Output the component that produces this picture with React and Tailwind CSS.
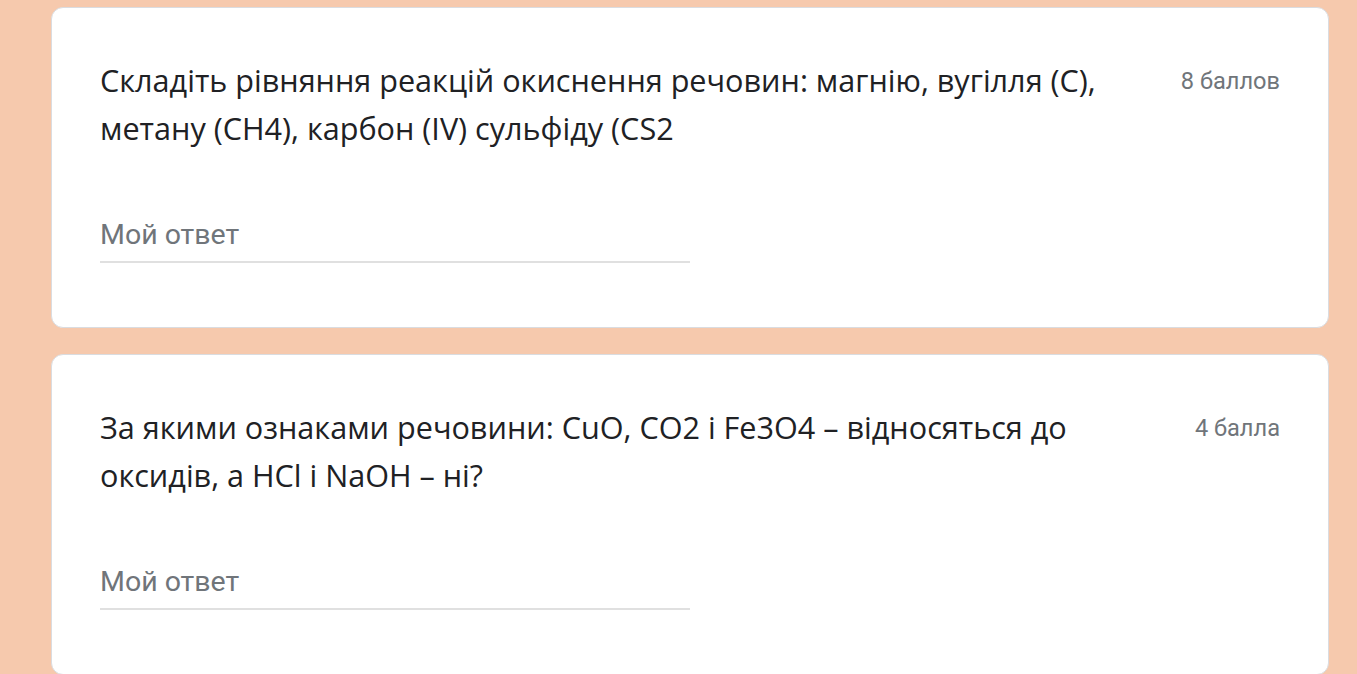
import React from 'react';

const questions = [
  {
    id: 1,
    title: 'Складіть рівняння реакцій окиснення речовин: магнію, вугілля (С), метану (СН4), карбон (IV) сульфіду (CS2',
    points: '8 баллов',
  },
  {
    id: 2,
    title: 'За якими ознаками речовини: CuO, CO2 і Fe3O4 – відносяться до оксидів, а HCl і NaOH – ні?',
    points: '4 балла',
  },
];

const QuestionCard = ({ title, points }) => (
  <div className="rounded-[12px] border border-[#dadce0] bg-white px-12 pb-16 pt-12">
    <div className="flex items-start justify-between gap-10">
      <p className="max-w-[1040px] font-['Open_Sans',sans-serif] text-[30.6px] leading-[48px] text-[#202124]">
        {title}
      </p>
      <span className="shrink-0 whitespace-nowrap pt-[10px] font-['Roboto',sans-serif] text-[23.6px] leading-[30px] text-[#70757a]">
        {points}
      </span>
    </div>
    <div className="mt-[67px] w-[590px] border-b-2 border-[#e0e0e0] pb-[10px]">
      <span className="font-['Roboto',sans-serif] text-[28.5px] leading-[32px] text-[#70757a]">Мой ответ</span>
    </div>
  </div>
);

const App = () => (
  <div className="min-h-screen w-[1357px] bg-[#f6c9ad] pb-10 pl-[51px] pr-[28px] pt-[7px]">
    <div className="flex flex-col gap-[26px]">
      {questions.map((q) => (
        <QuestionCard key={q.id} title={q.title} points={q.points} />
      ))}
    </div>
  </div>
);

export default App;
